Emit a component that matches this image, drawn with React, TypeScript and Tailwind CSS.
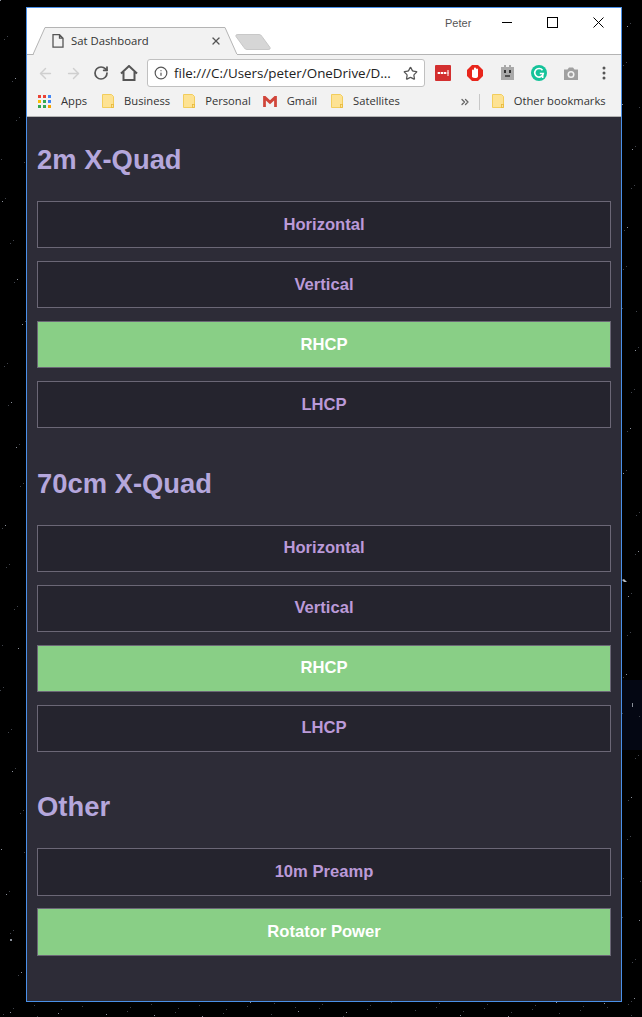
import { ArrowLeft, ArrowRight, Info, RotateCw, Star, X, ChevronsRight } from 'lucide-react';

const sans = 'font-["Liberation_Sans",Arial,sans-serif]';
const chrome = 'font-["Open_Sans","Noto_Sans",sans-serif]';

// scattered dots down the strips of desktop wallpaper around the window
const stars: number[][] = [];
for (let i = 0; i < 150; i++) {
  const a = (i * 7919) % 1017;
  const b = (i * 104729) % 97;
  if (i % 3 === 0) stars.push([(b % 26), a]);
  else if (i % 3 === 1) stars.push([622 + (b % 20), a]);
  else stars.push([(i * 4391) % 642, 1002 + (b % 15)]);
}

function Sky() {
  return (
    <svg className="absolute inset-0" width="642" height="1017">
      <rect width="642" height="1017" fill="#000" />
      <rect x="622" y="680" width="20" height="70" fill="#040713" />
      {stars.map(([x, y], i) => (
        <rect key={i} x={x} y={y} width="1" height="1" fill={i % 4 === 0 ? '#8a8f99' : '#3f434b'} />
      ))}
      <path d="M622 580l2-1 3 3-3 0z" fill="#b4b8c0" />
      <rect x="10" y="939" width="2" height="2" fill="#8a8f99" />
      <rect x="632" y="703" width="1" height="4" fill="#8a8f99" />
    </svg>
  );
}

function Folder() {
  return (
    <svg width="12" height="14" viewBox="0 0 12 14" className="shrink-0">
      <path d="M.5.5h9l2 2v11H.5z" fill="#fde293" stroke="#f2cd5c" />
      <rect x="9.500" y="10.500" width="2" height="3" fill="#fde293" stroke="#e8b93a" strokeWidth="0.8" />
    </svg>
  );
}

function AppsGrid() {
  const colors = ['#ea4335', '#ea4335', '#4285f4', '#fbbc05', '#34a853', '#4285f4', '#34a853', '#34a853', '#f4a100'];
  return (
    <div className="grid w-[13px] grid-cols-3 gap-[2px]">
      {colors.map((c, i) => (
        <div key={i} className="h-[3px] w-[3px]" style={{ backgroundColor: c }} />
      ))}
    </div>
  );
}

function Bookmark({ label, className }: { label: string; className: string }) {
  return (
    <div className={`flex items-center gap-[10px] whitespace-nowrap ${className}`}>
      <Folder />
      <span>{label}</span>
    </div>
  );
}

function BrowserChrome() {
  return (
    <div className={`${chrome} text-[#333]`}>
      <div className="relative h-[47px] border-b border-[#b4b4b4] bg-white">
        <span className={`absolute left-[418px] top-[8px] text-[11px] leading-[14px] text-[#555] ${sans}`}>Peter</span>
        <svg className="absolute left-[475px] top-[9px]" width="11" height="11">
          <path d="M0 5.500h10" stroke="#000" />
        </svg>
        <svg className="absolute left-[520px] top-[9px]" width="11" height="11">
          <rect x=".5" y=".5" width="10" height="10" fill="none" stroke="#000" />
        </svg>
        <svg className="absolute left-[566px] top-[9px]" width="11" height="11">
          <path d="M.5.5l10 10M10.500.5l-10 10" stroke="#000" />
        </svg>
        {/* tab */}
        <svg className="absolute left-0 top-[18px]" width="250" height="29">
          <path d="M0 28.500h6L18 1.500h180l12 27" fill="#f2f2f2" stroke="#b4b4b4" />
          <path d="M7 28.500h203" stroke="#f2f2f2" />
          <path d="M211 8.500h21q2 0 3 2l8 11q1 2-2 2h-21q-2 0-3-2l-8-11q-1-2 2-2z" fill="#d6d6d6" stroke="#c8c8c8" />
        </svg>
        <svg className="absolute left-[25px] top-[26px]" width="12" height="14" viewBox="0 0 12 14">
          <path d="M1 .7h6.500l3.500 3.500v9H1zM7.500.7v3.500H11" fill="none" stroke="#555" strokeWidth="1.300" />
        </svg>
        <span className="absolute left-[44px] top-[24px] whitespace-nowrap text-[11.3px] leading-[17px] text-[#333]">Sat Dashboard</span>
        <X className="absolute left-[183px] top-[27px] h-[12px] w-[12px] text-[#555]" strokeWidth={2.6} />
      </div>

      <div className="flex h-[32px] items-center bg-[#f2f2f2] pt-[4px]">
        <ArrowLeft className="ml-[10px] h-[17px] w-[17px] text-[#cfcfcf]" strokeWidth={2} />
        <ArrowRight className="ml-[11px] h-[17px] w-[17px] text-[#cfcfcf]" strokeWidth={2} />
        <RotateCw className="ml-[11px] h-[16px] w-[16px] text-[#555]" strokeWidth={2.6} />
        <svg className="ml-[11px]" width="18" height="16" viewBox="0 0 18 16">
          <path d="M1 8.500L9 1l8 7.500M3.500 7v8h11V7" fill="none" stroke="#555" strokeWidth="2" />
        </svg>
        <div className="ml-[9px] flex h-[28px] w-[278px] items-center rounded-[3px] border border-[#c0c0c0] bg-white pl-[6px]">
          <Info className="h-[14px] w-[14px] text-[#555]" strokeWidth={2} />
          <span className="ml-[6px] flex-1 whitespace-nowrap text-[13.4px] text-[#222]">file:///C:/Users/peter/OneDrive/D...</span>
          <Star className="mr-[6px] h-[15px] w-[15px] text-[#555]" strokeWidth={2} />
        </div>
        <svg className="ml-[10px]" width="16" height="16" viewBox="0 0 16 16">
          <rect width="16" height="16" rx="1" fill="#d32f2f" />
          <path d="M2 8h12" stroke="#f4b4b4" />
          <path d="M3 7h2v2H3zM6 7h2v2H6zM9 7h2v2H9z" fill="#fff" />
          <rect x="12.500" y="5" width="1" height="6" fill="#fff" />
        </svg>
        <svg className="ml-[16px]" width="16" height="16" viewBox="0 0 16 16">
          <path d="M5 0h6l5 5v6l-5 5H5l-5-5V5z" fill="#e8261c" />
          <path d="M5 12V5.500a1 1 0 0 1 2 0V3.500a1 1 0 0 1 2 0v1a1 1 0 0 1 2 0v6.500q0 2-3 2-2 0-3-1z" fill="#fff" />
        </svg>
        <svg className="ml-[17px]" width="15" height="16" viewBox="0 0 15 16">
          <path d="M1 2h3V0h2v2h3V0h2v2h3v13H1z" fill="#a9a9a9" />
          <rect x="4" y="5" width="2" height="3" fill="#333" />
          <rect x="9" y="5" width="2" height="3" fill="#333" />
          <path d="M5 11h5" stroke="#333" strokeWidth="1.500" />
        </svg>
        <svg className="ml-[16px]" width="16" height="16" viewBox="0 0 16 16">
          <circle cx="8" cy="8" r="8" fill="#15c39a" />
          <path d="M11.500 5.200A4.300 4.300 0 1 0 12.300 8.500H8.800" fill="none" stroke="#fff" strokeWidth="1.600" />
          <path d="M11.700 10.500v2.500" stroke="#fff" strokeWidth="1.600" />
        </svg>
        <svg className="ml-[17px]" width="14" height="13" viewBox="0 0 14 13">
          <path d="M0 2.500h3.500L5 .5h4l1.500 2H14V13H0z" fill="#a0a0a0" />
          <circle cx="7" cy="7.500" r="3.500" fill="#f2f2f2" />
          <circle cx="7" cy="7.500" r="2" fill="#a0a0a0" />
        </svg>
        <svg className="ml-[24px]" width="4" height="14" viewBox="0 0 4 14">
          <circle cx="2" cy="2" r="1.500" fill="#555" />
          <circle cx="2" cy="7" r="1.500" fill="#555" />
          <circle cx="2" cy="12" r="1.500" fill="#555" />
        </svg>
      </div>

      <div className="flex h-[30px] items-center border-b border-[#b4b4b4] bg-[#f2f2f2] text-[11.2px] text-[#333]">
        <div className="ml-[11px] flex items-center gap-[10px]">
          <AppsGrid />
          <span>Apps</span>
        </div>
        <Bookmark label="Business" className="ml-[15px]" />
        <Bookmark label="Personal" className="ml-[13px]" />
        <div className="ml-[12px] flex items-center gap-[10px]">
          <svg width="14" height="11" viewBox="0 0 15 12">
            <path d="M0 0h2.500L7.500 4.500 12.500 0H15v12h-3V5L7.500 9 3 5v7H0z" fill="#d0453a" />
          </svg>
          <span>Gmail</span>
        </div>
        <Bookmark label="Satellites" className="ml-[14px]" />
        <ChevronsRight className="ml-[59px] h-[12px] w-[12px] text-[#666]" strokeWidth={2.6} />
        <div className="ml-[8px] h-[16px] w-px bg-[#c8c8c8]" />
        <Bookmark label="Other bookmarks" className="ml-[12px]" />
      </div>
    </div>
  );
}

function Toggle({ label, on, className = '' }: { label: string; on?: boolean; className?: string }) {
  return (
    <button
      className={`flex w-full items-center justify-center border border-[#6b6776] text-[16.6px] font-bold ${className} ${
        on ? 'bg-[#89cf86] text-white' : 'bg-[#25242e] text-[#bb9ad8]'
      }`}
    >
      {label}
    </button>
  );
}

function Section({ title, labels, on, className, buttonClass, tall }: { title: string; labels: string[]; on: string; className: string; buttonClass: string; tall?: boolean }) {
  return (
    <section className={className}>
      <h2 className="mb-[25px] text-[27.4px] font-bold leading-[32px] text-[#b5a7dc]">{title}</h2>
      <div className={`flex flex-col ${tall ? 'gap-[12px]' : 'gap-[13px]'}`}>
        {labels.map((label) => (
          <Toggle key={label} label={label} on={label === on} className={buttonClass} />
        ))}
      </div>
    </section>
  );
}

export default function App() {
  return (
    <div className="relative h-[1017px] w-[642px] overflow-hidden bg-black">
      <Sky />
      <div className="relative ml-[26px] mt-[7px] h-[995px] w-[596px] border border-[#4a90e8] bg-[#2d2c37]">
        <BrowserChrome />
        <main className={`px-[10px] pt-[27px] ${sans}`}>
          <Section title="2m X-Quad" labels={['Horizontal', 'Vertical', 'RHCP', 'LHCP']} on="RHCP" className="" buttonClass="h-[47px] pt-[2px]" />
          <Section title="70cm X-Quad" labels={['Horizontal', 'Vertical', 'RHCP', 'LHCP']} on="RHCP" className="mt-[40px]" buttonClass="h-[47px]" />
          <Section title="Other" labels={['10m Preamp', 'Rotator Power']} on="Rotator Power" className="mt-[39px]" buttonClass="h-[48px]" tall />
        </main>
      </div>
    </div>
  );
}
